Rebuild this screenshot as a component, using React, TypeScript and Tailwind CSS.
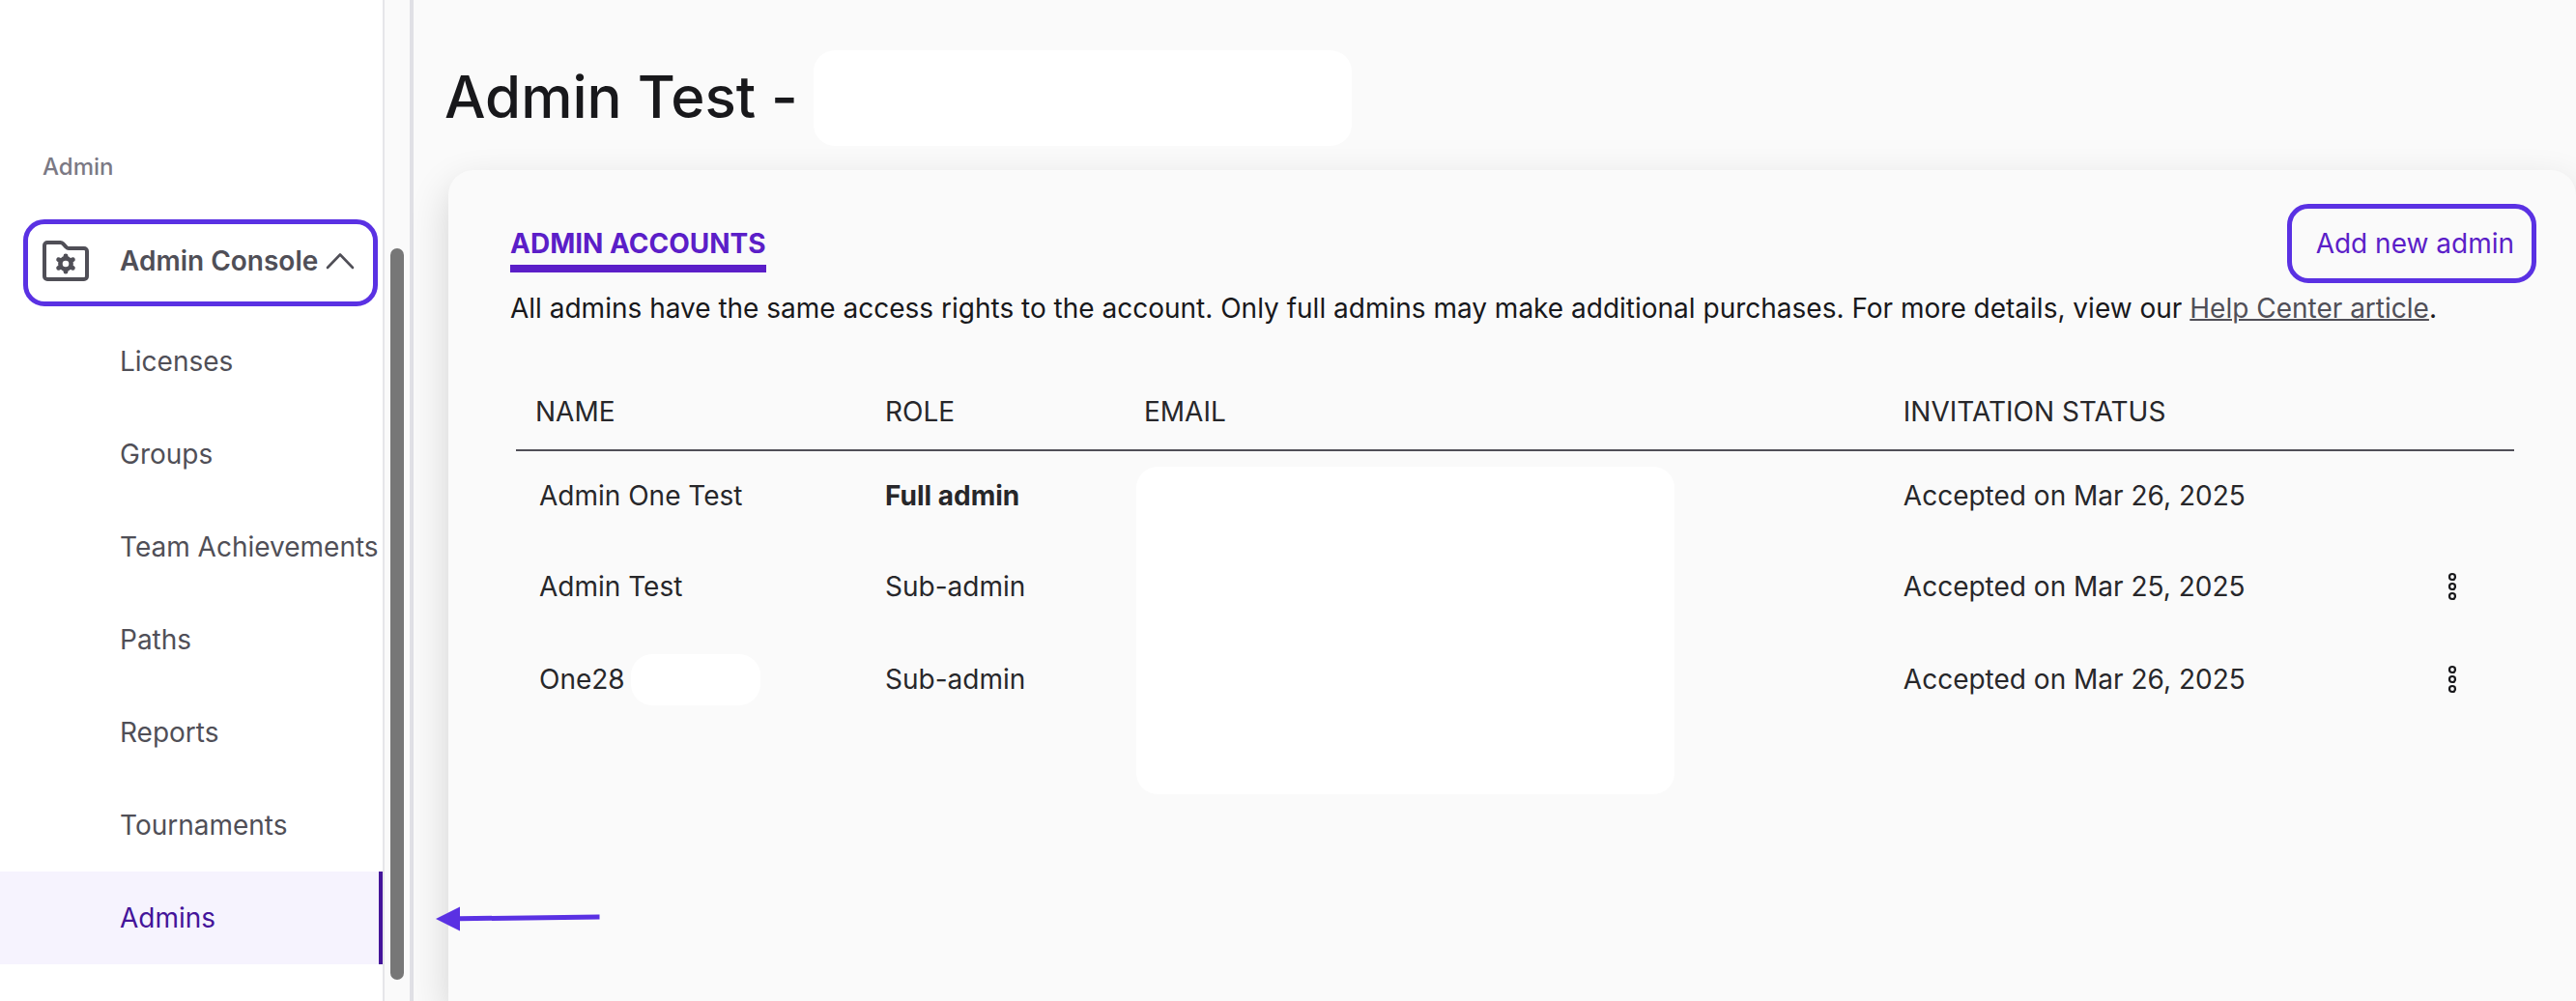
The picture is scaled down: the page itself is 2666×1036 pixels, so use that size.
import React from 'react';

interface AdminAccount {
  name: string;
  role: string;
  status: string;
  isFull?: boolean;
  hasHiddenName?: boolean;
}

const NAV_ITEMS = ['Licenses', 'Groups', 'Team Achievements', 'Paths', 'Reports', 'Tournaments', 'Admins'];

const ACCOUNTS: AdminAccount[] = [
  { name: 'Admin One Test', role: 'Full admin', status: 'Accepted on Mar 26, 2025', isFull: true },
  { name: 'Admin Test', role: 'Sub-admin', status: 'Accepted on Mar 25, 2025' },
  { name: 'One28', role: 'Sub-admin', status: 'Accepted on Mar 26, 2025', hasHiddenName: true },
];

function FolderGearIcon() {
  return (
    <svg width="48" height="42" viewBox="0 0 48 42" fill="none" aria-hidden="true">
      <path
        d="M5 2H18.5C19.6 2 20.4 2.4 21.2 3.2L24.6 6.8C25.3 7.6 26 8 27 8H43C44.7 8 46 9.3 46 11V37C46 38.7 44.7 40 43 40H5C3.3 40 2 38.7 2 37V5C2 3.3 3.3 2 5 2Z"
        stroke="currentColor"
        strokeWidth="4"
      />
      <circle cx="24" cy="24" r="5.6" stroke="currentColor" strokeWidth="4.6" />
      <path
        d="M24 16.5V15.800M24 31.5V32.2M17.5 20.2L16.6 19.700M30.5 27.8L31.4 28.3M17.5 27.8L16.6 28.3M30.5 20.2L31.4 19.7"
        stroke="currentColor"
        strokeWidth="4.8"
        strokeLinecap="round"
      />
    </svg>
  );
}

function KebabIcon() {
  return (
    <svg width="10" height="30" viewBox="0 0 10 30" fill="none" stroke="#18181b" strokeWidth="2.2" aria-hidden="true">
      <circle cx="5" cy="5" r="3" />
      <circle cx="5" cy="15" r="3" />
      <circle cx="5" cy="25" r="3" />
    </svg>
  );
}

function Sidebar() {
  return (
    <aside className="flex shrink-0 border-r-4 border-[#e0e0e5]">
      <nav className="w-[398px] border-r-2 border-[#e6e6e9] bg-white pt-[157px] text-[#504f57]">
        <h2 className="pl-11 text-[24px] leading-8 font-medium text-[#7b7984]">Admin</h2>

        {/* Section toggle */}
        <button
          type="button"
          className="mt-[38px] ml-6 flex h-[90px] w-[367px] items-center rounded-[22px] border-5 border-[#5a31e3] pb-1 pl-[15px] font-semibold"
        >
          <FolderGearIcon />
          <span className="ml-8">Admin Console</span>
          <svg className="ml-2" width="30" height="18" viewBox="0 0 30 18" fill="none" aria-hidden="true">
            <path d="M2 16L15 2.5L28 16" stroke="currentColor" strokeWidth="2.6" strokeLinecap="round" strokeLinejoin="round" />
          </svg>
        </button>

        <ul className="mt-[9px]">
          {NAV_ITEMS.map((item) => (
            <li key={item}>
              <a
                href="#"
                className={
                  item === 'Admins'
                    ? 'flex h-24 items-center border-r-4 border-[#44149a] bg-[#f6f3fe] pl-31 text-[#44149a]'
                    : 'flex h-24 items-center pl-31 whitespace-nowrap'
                }
              >
                {item}
              </a>
            </li>
          ))}
        </ul>
      </nav>

      {/* Scroll track */}
      <div className="w-[26px] px-1.5 pt-[257px]">
        <div className="h-[757px] w-3.5 rounded-full bg-[#777777]" />
      </div>
    </aside>
  );
}

function AdminTable() {
  return (
    <table className="mt-12 ml-1.5 w-[calc(100%-6px)] table-fixed border-separate border-spacing-0 text-left text-[#27272a]">
      <thead>
        <tr className="h-20 *:border-b-2 *:border-[#504f57] *:font-normal">
          <th className="w-[382px] pl-5">NAME</th>
          <th className="w-[268px]">ROLE</th>
          <th className="w-[38%]">EMAIL</th>
          <th>INVITATION STATUS</th>
          <th className="w-32" aria-label="Actions" />
        </tr>
      </thead>
      <tbody>
        {ACCOUNTS.map((account, index) => (
          <tr key={account.name} className={index === 0 ? 'h-23' : 'h-24'}>
            <td className="pl-6">
              <div className="flex items-center gap-1.5">
                {account.name}
                {account.hasHiddenName && <span className="h-[53px] w-[134px] rounded-[22px] bg-white" />}
              </div>
            </td>
            <td className={account.isFull ? 'font-bold' : ''}>{account.role}</td>
            <td className="relative">
              {/* One cover hides the whole email column */}
              {index === 0 && <div className="absolute top-4 -left-2 h-[339px] w-[557px] rounded-[22px] bg-white" />}
            </td>
            <td>{account.status}</td>
            <td>
              {!account.isFull && (
                <button type="button" aria-label={`Options for ${account.name}`} className="mx-auto block">
                  <KebabIcon />
                </button>
              )}
            </td>
          </tr>
        ))}
      </tbody>
    </table>
  );
}

export default function App() {
  return (
    <div className="relative flex min-h-screen overflow-hidden bg-[#fafafa] font-['Inter',sans-serif] text-[28px] leading-10">
      <Sidebar />

      <main className="flex min-w-0 flex-1 flex-col pt-[52px] pl-9">
        <div className="flex h-[99px] items-center gap-4">
          <h1 className="-ml-1 pb-1 text-[60px] leading-none font-medium text-[#18181b]">Admin Test -</h1>
          <div className="h-full w-[557px] rounded-[22px] bg-white" />
        </div>

        <section className="mt-[25px] flex-1 rounded-t-[26px] bg-[#fafafa] pt-[35px] pr-16 pl-16 shadow-[0_16px_40px_rgba(0,0,0,0.16)]">
          <div className="flex items-start justify-between">
            <h2 className="mt-[19px] border-b-8 border-[#5b1ec8] leading-11 font-bold text-[#5b1ec8]">ADMIN ACCOUNTS</h2>
            <button
              type="button"
              className="-mr-[23px] h-[82px] rounded-[22px] border-5 border-[#5a31e3] pr-[18px] pl-[25px] text-[#5b1ec8]"
            >
              Add new admin
            </button>
          </div>

          <p className="mt-1.5 text-[#18181b]">
            All admins have the same access rights to the account. Only full admins may make additional purchases. For more
            details, view our{' '}
            <a href="#" className="text-[#504f57] underline decoration-2">
              Help Center article
            </a>
            .
          </p>

          <AdminTable />
        </section>
      </main>

      {/* Pointer to the active item */}
      <svg className="absolute top-[938px] left-[451px]" width="170" height="26" viewBox="0 0 170 26" aria-hidden="true">
        <path d="M0 13L25 0.5V25.5Z" fill="#5a31e3" />
        <path d="M24 12.8L169.5 11" stroke="#5a31e3" strokeWidth="5" />
      </svg>
    </div>
  );
}
